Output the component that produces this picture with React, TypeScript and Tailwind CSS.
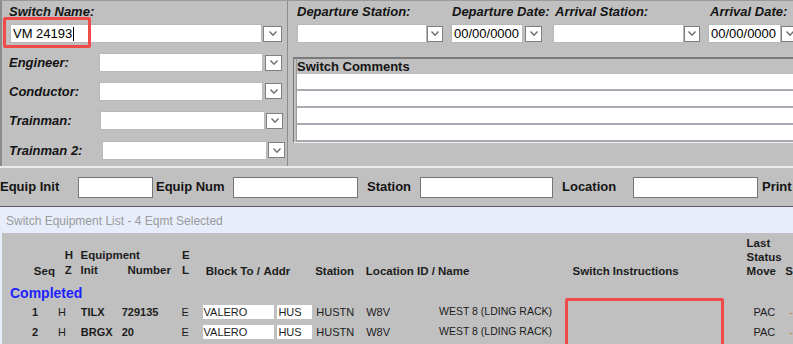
import React from "react";

const Chevron = () => (
    <svg width="8" height="5" viewBox="0 0 8 5">
        <polyline points="0.5,0.6 4,4.2 7.5,0.6" fill="none" stroke="#6b6b6b" strokeWidth="1.4" />
    </svg>
)

// old style dropdown: white field + small button with a chevron
function Sel({ field, btn, children }: { field: string; btn: string; children?: React.ReactNode }) {
    return (
        <div className="flex items-center">
            <div className={`${field} h-[19px] bg-white border border-[#b8b8b8] flex items-center pl-[2px] text-[13px] leading-none text-black`}>
                {children}
            </div>
            <div className={`${btn} h-[16px] bg-white border border-[#7f7f7f] flex items-center justify-center`}>
                <Chevron />
            </div>
        </div>
    )
}

function CrewRow({ label, labelW, field, btn, mt }: { label: string; labelW: string; field: string; btn: string; mt: string }) {
    return (
        <div className={`flex items-center ${mt}`}>
            <div className={`${labelW} pl-[7px] text-[13px] font-bold italic text-[#141414]`}>{label}</div>
            <Sel field={field} btn={btn} />
        </div>
    )
}

export default function App() {
    return (
        <div className="relative w-[793px] h-[344px] overflow-hidden bg-[#c0c0c0] font-['Liberation_Sans',Arial,sans-serif] text-[#141414]">

            {/* top: switch header + comments */}
            <div className="flex h-[168px] border-t border-[#9a9a9a] border-b-2 border-b-[#ececec]">

                <div className="w-[288px] shrink-0 border-l-2 border-r border-[#8c8c8c]">
                    <div className="mt-[3px] h-[16px] leading-[16px] pl-[7px] text-[13px] font-bold italic">Switch Name:</div>
                    <div className="mt-[4px] ml-[8px]">
                        <Sel field="w-[252px]" btn="w-[19px] ml-[1px]">
                            <span>VM 24193</span>
                            <span className="inline-block w-px h-[14px] bg-black ml-px"></span>
                        </Sel>
                    </div>
                    <CrewRow label="Engineer:" labelW="w-[97px]" field="w-[164px]" btn="w-[17px] ml-[2px]" mt="mt-[10px]" />
                    <CrewRow label="Conductor:" labelW="w-[97px]" field="w-[164px]" btn="w-[17px] ml-[2px]" mt="mt-[9px]" />
                    <CrewRow label="Trainman:" labelW="w-[98px]" field="w-[165px]" btn="w-[17px] ml-[1px]" mt="mt-[10px]" />
                    <CrewRow label="Trainman 2:" labelW="w-[100px]" field="w-[165px]" btn="w-[17px] ml-[1px]" mt="mt-[10px]" />
                </div>

                <div className="flex-1 min-w-0">
                    <div className="flex ml-[9px] mt-[3px]">
                        <div className="w-[154px] shrink-0">
                            <div className="h-[16px] leading-[16px] text-[13px] font-bold italic whitespace-nowrap">Departure Station:</div>
                            <div className="mt-[4px]"><Sel field="w-[130px]" btn="w-[16px] ml-0" /></div>
                        </div>
                        <div className="w-[102px] shrink-0">
                            <div className="h-[16px] leading-[16px] ml-[1px] text-[13px] font-bold italic whitespace-nowrap">Departure Date:</div>
                            <div className="mt-[4px]"><Sel field="w-[72px]" btn="w-[17px] ml-[2px]">00/00/0000</Sel></div>
                        </div>
                        <div className="w-[155px] shrink-0">
                            <div className="h-[16px] leading-[16px] ml-[2px] text-[13px] font-bold italic whitespace-nowrap">Arrival Station:</div>
                            <div className="mt-[4px]"><Sel field="w-[131px]" btn="w-[16px] ml-0" /></div>
                        </div>
                        <div className="shrink-0">
                            <div className="h-[16px] leading-[16px] ml-[2px] text-[13px] font-bold italic whitespace-nowrap">Arrival Date:</div>
                            <div className="mt-[4px]"><Sel field="w-[73px]" btn="w-[17px] ml-0">00/00/0000</Sel></div>
                        </div>
                    </div>

                    <div className="mt-[14px] ml-[5px] border-t-2 border-l border-[#7a7a7a] border-b border-b-[#f2f2f2] pl-[2px]">
                        <div className="border-l border-[#9c9c9c]">
                            <div className="h-[15px] leading-[15px] text-[13px] font-bold">Switch Comments</div>
                            <div className="h-[17px] bg-white border-b-2 border-[#a9a9b1]"></div>
                            <div className="h-[17px] bg-white border-b-2 border-[#a9a9b1]"></div>
                            <div className="h-[17px] bg-white border-b-2 border-[#a9a9b1]"></div>
                            <div className="h-[17px] bg-white border-b-2 border-[#a9a9b1]"></div>
                        </div>
                    </div>
                </div>
            </div>

            {/* equipment filter */}
            <div className="flex items-center h-[39px] border-b border-[#5c5c5c] text-[13px] font-bold whitespace-nowrap">
                <div className="w-[78px]">Equip Init</div>
                <div className="w-[75px] h-[21px] bg-white border border-[#767676]"></div>
                <div className="w-[77px] ml-[3px]">Equip Num</div>
                <div className="w-[125px] h-[21px] bg-white border border-[#767676]"></div>
                <div className="w-[53px] ml-[9px]">Station</div>
                <div className="w-[133px] h-[21px] bg-white border border-[#767676]"></div>
                <div className="w-[71px] ml-[9px]">Location</div>
                <div className="w-[125px] h-[21px] bg-white border border-[#767676]"></div>
                <div className="ml-[4px]">Print</div>
            </div>

            <div className="h-[26px] bg-[#e7edfb] flex items-center pl-[6px] pt-[2px] text-[12px] text-[#9a9a9a]">
                Switch Equipment List - 4 Eqmt Selected
            </div>

            {/* equipment list */}
            <div className="border-l-2 border-[#e7edfb] h-[120px]">
                <div className="flex items-end pt-[3px] text-[11.5px] font-bold text-[#1c1c1c] whitespace-nowrap">
                    <div className="w-[32px]"></div>
                    <div className="w-[31px] leading-[14px]">Seq</div>
                    <div className="w-[16px] leading-[15px] flex flex-col"><span>H</span><span>Z</span></div>
                    <div className="w-[102px] leading-[15px] flex flex-col">
                        <span>Equipment</span>
                        <div className="flex"><span className="w-[47px]">Init</span><span>Number</span></div>
                    </div>
                    <div className="w-[24px] leading-[15px] flex flex-col"><span>E</span><span>L</span></div>
                    <div className="w-[58px] leading-[14px]">Block To /</div>
                    <div className="w-[52px] leading-[14px]">Addr</div>
                    <div className="w-[51px] leading-[14px]">Station</div>
                    <div className="w-[208px] leading-[14px]">Location ID / Name</div>
                    <div className="w-[175px] leading-[14px]">Switch Instructions</div>
                    <div className="w-[39px] leading-[14px] flex flex-col"><span>Last</span><span>Status</span><span>Move</span></div>
                    <div className="leading-[14px]">S</div>
                </div>

                <div className="mt-[7px] pl-[8px] leading-[17px] text-[14px] font-bold text-[#1f1fff]">Completed</div>

                {[
                    { seq: "1", init: "TILX", num: "729135" },
                    { seq: "2", init: "BRGX", num: "20" },
                ].map(r => (
                    <div key={r.seq} className="flex items-center h-[20px] text-[11px] text-[#1c1c1c] whitespace-nowrap">
                        <div className="w-[30px]"></div>
                        <div className="w-[26px] font-bold">{r.seq}</div>
                        <div className="w-[23px]">H</div>
                        <div className="w-[41px] font-bold">{r.init}</div>
                        <div className="w-[60px] font-bold">{r.num}</div>
                        <div className="w-[21px]">E</div>
                        <div className="w-[72px] h-[14px] bg-white pl-[1px] leading-[14px]">VALERO</div>
                        <div className="w-[35px] h-[14px] ml-[3px] bg-white pl-[1px] leading-[14px]">HUS</div>
                        <div className="w-[4px]"></div>
                        <div className="w-[50px]">HUSTN</div>
                        <div className="w-[73px]">W8V</div>
                        <div className="w-[315px] text-[10.5px]">WEST 8 (LDING RACK)</div>
                        <div className="w-[36px]">PAC</div>
                        <div className="text-[#c08a2a]">-</div>
                    </div>
                ))}
            </div>

            {/* red highlight annotations */}
            <div className="absolute left-[3px] top-[17px] w-[88px] h-[31px] border-[3px] border-[#f04a4a] rounded-[2px]"></div>
            <div className="absolute left-[565px] top-[298px] w-[159px] h-[52px] border-[3px] border-[#f04a4a] rounded-[2px]"></div>
        </div>
    )
}
